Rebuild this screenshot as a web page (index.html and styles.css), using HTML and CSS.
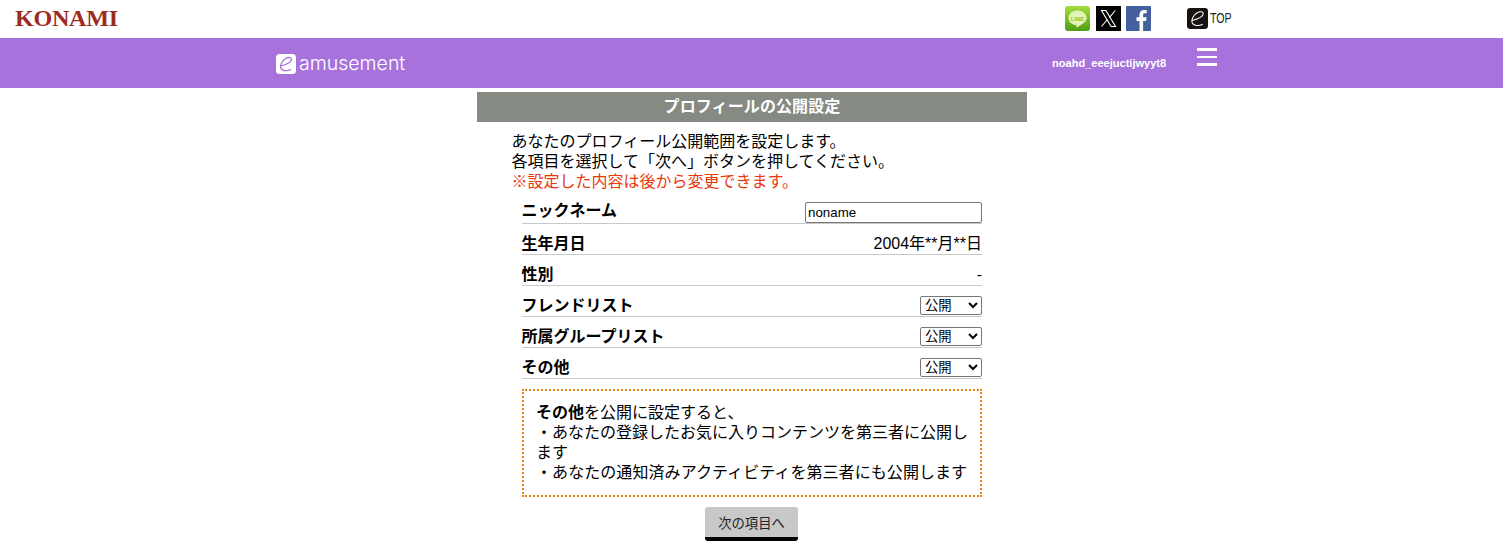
FILE: index.html
```html
<!DOCTYPE html>
<html lang="ja">
<head>
<meta charset="utf-8">
<title>プロフィールの公開設定</title>
<link rel="stylesheet" href="styles.css">
</head>
<body>
<header class="topbar">
  <div class="konami"><span class="konami-word">KONAMI</span></div>
  <div class="social">
    <svg class="sicon" viewBox="0 0 25 25"><defs><linearGradient id="lg" x1="0" y1="0" x2="0" y2="1"><stop offset="0" stop-color="#a6dc3c"/><stop offset="1" stop-color="#4f9e14"/></linearGradient></defs><rect width="25" height="25" rx="3" fill="url(#lg)"/><path d="M12.5 4.500C7.500 4.500 3.500 7.800 3.500 12c0 3.600 3.100 6.500 7.400 7.100.8.200.4 1.400.3 2-.1.500.3.600.8.300 2.400-1.400 7.500-4.500 8.700-6.300.7-1 1-2 1-3.100C21.500 7.800 17.500 4.500 12.500 4.500z" fill="#e3f4b8"/><text x="12.500" y="14.500" class="linetxt">LINE</text></svg>
    <svg class="sicon" viewBox="0 0 25 25"><rect width="25" height="25" fill="#000"/><path d="M5.500 4.500h4.400l9.600 16h-4.400z" fill="none" stroke="#fff" stroke-width="1.100"/><path d="M19.300 4.500l-6 7.100M11.500 13.500l-6 7" stroke="#fff" stroke-width="1.100" fill="none"/></svg>
    <svg class="sicon" viewBox="0 0 25 25"><rect width="25" height="25" rx="1" fill="#44609f"/><path d="M13.500 25V15h-3v-3.800h3V8.600c0-3.100 1.900-4.700 4.600-4.700 1.300 0 2.300.1 2.600.1v3.300h-1.900c-1.400 0-1.700.7-1.700 1.700v2.200h3.500l-.5 3.800h-3V25z" fill="#fff"/></svg>
  </div>
  <div class="toplink">
    <svg class="eicon" viewBox="0 0 20 20"><rect width="20" height="20" rx="3" fill="#17120f"/><path d="M4.800 12C9 10.800 15.500 8.200 15.500 5.200 15.500 3.200 12.300 3 9.700 4.500 6 6.800 3.800 11 4.800 14c1 3 6.200 3.500 10.200 1.500" fill="none" stroke="#fff" stroke-width="1"/></svg>
    <span class="toptext">TOP</span>
  </div>
</header>
<nav class="band">
  <div class="brand">
    <svg class="brandicon" viewBox="0 0 20 20"><rect width="20" height="20" rx="3.500" fill="#fff"/><path d="M4.800 12C9 10.800 15.500 8.200 15.500 5.200 15.500 3.200 12.300 3 9.700 4.500 6 6.800 3.800 11 4.800 14c1 3 6.200 3.500 10.200 1.500" fill="none" stroke="#a772dc" stroke-width="1.300"/></svg>
    <span class="brandtext">amusement</span>
  </div>
  <div class="user">noahd_eeejuctijwyyt8</div>
  <div class="burger"><span></span><span></span><span></span></div>
</nav>
<main class="page">
  <h1 class="title">プロフィールの公開設定</h1>
  <div class="intro">
    <p>あなたのプロフィール公開範囲を設定します。</p>
    <p>各項目を選択して「次へ」ボタンを押してください。</p>
    <p class="warn">※設定した内容は後から変更できます。</p>
  </div>
  <div class="rows">
    <div class="row first"><b class="label">ニックネーム</b><input class="nick" type="text" value="noname"></div>
    <div class="row"><b class="label">生年月日</b><span class="val">2004年**月**日</span></div>
    <div class="row"><b class="label">性別</b><span class="val">-</span></div>
    <div class="row"><b class="label">フレンドリスト</b><select class="sel"><option>公開</option></select></div>
    <div class="row"><b class="label">所属グループリスト</b><select class="sel"><option>公開</option></select></div>
    <div class="row"><b class="label">その他</b><select class="sel"><option>公開</option></select></div>
  </div>
  <div class="note">
    <p><b>その他</b>を公開に設定すると、</p>
    <p>・あなたの登録したお気に入りコンテンツを第三者に公開します</p>
    <p class="wide">・あなたの通知済みアクティビティを第三者にも公開します</p>
  </div>
  <div class="actions"><button class="next" type="button">次の項目へ</button></div>
</main>
</body>
</html>
```
FILE: styles.css
```css
* { box-sizing: border-box; }
html, body { margin: 0; padding: 0; background: #fff; }
body {
  font-family: "Liberation Sans", "Noto Sans CJK JP", sans-serif;
  font-size: 16px;
  color: #000;
  overflow: hidden;
}
p { margin: 0; }

.topbar {
  height: 38px;
  display: flex;
  align-items: flex-start;
  background: #fff;
}
.konami {
  margin: 5px 0 0 15px;
  width: 1050px;
  height: 27px;
}
.konami-word {
  display: inline-block;
  font-family: "Liberation Serif", serif;
  font-weight: 700;
  font-size: 23px;
  line-height: 27px;
  letter-spacing: -0.300px;
  color: #9e2a1e;
  transform: scaleX(1.05);
  transform-origin: left center;
}
.social { display: flex; margin-top: 6px; }
.sicon { width: 25px; height: 25px; display: block; margin-left: 5px; }
.sicon:first-child { margin-left: 0; }
.sicon:nth-child(2) { margin-left: 6px; }
.linetxt { font: 700 6px "Liberation Sans", sans-serif; fill: #86c52c; text-anchor: middle; }
.toplink { display: flex; align-items: center; margin: 8px 0 0 36px; }
.eicon { width: 21px; height: 21px; display: block; }
.toptext {
  margin-left: 2px;
  font-family: "Liberation Sans", sans-serif;
  font-size: 14px;
  line-height: 21px;
  width: 22px;
  display: inline-block;
  transform: scaleX(0.76);
  transform-origin: left center;
  color: #222;
}

.band {
  height: 50px;
  background: #a772dc;
  display: flex;
  align-items: flex-start;
  color: #fff;
}
.brand { display: flex; align-items: center; margin: 15px 0 0 276px; width: 776px; height: 21px; }
.brandicon { width: 20px; height: 20px; display: block; }
.brandtext {
  margin: 0 0 1px 3px;
  font-family: "Inter", sans-serif;
  font-weight: 300;
  font-size: 19.500px;
  line-height: 20px;
}
.user {
  margin-top: 17px;
  width: 145px;
  font-size: 11.050px;
  font-weight: 700;
  line-height: 16px;
  white-space: nowrap;
}
.burger { margin-top: 10px; width: 20px; display: flex; flex-direction: column; gap: 5px; }
.burger span { display: block; height: 2.500px; background: #fff; }

.page { width: 550px; margin: 4px 0 0 477px; }
.title {
  margin: 0;
  height: 30px;
  background: #858a83;
  color: #fff;
  font-size: 16px;
  font-weight: 700;
  line-height: 30px;
  text-align: center;
  letter-spacing: 0.100px;
}
.intro { padding: 10px 0 0 34.500px; line-height: 20px; font-size: 16px; }
.warn { color: #e8380d; }

.rows { margin: 0 45px; padding-top: 1px; }
.row {
  height: 31px;
  display: flex;
  justify-content: space-between;
  align-items: flex-end;
  border-bottom: 1px solid #c8c8c8;
}
.label { font-size: 16px; line-height: 20px; margin-left: -0.500px; }
.first .label { margin-bottom: 2px; }
.val { font-size: 16px; line-height: 21px; }
.nick {
  width: 177px;
  height: 21px;
  padding: 1px 2px;
  border: 1px solid #767676;
  border-radius: 2px;
  font: 13.333px/17px "Liberation Sans", sans-serif;
  color: #000;
  background: #fff;
}
.sel {
  width: 62px;
  height: 19px;
  margin-bottom: 1px;
  padding: 0;
  border: 1px solid #767676;
  border-radius: 2px;
  font: 13.333px "Liberation Sans", "Noto Sans CJK JP", sans-serif;
  color: #000;
  background: #fff;
}

.note {
  margin: 10px 45px 0;
  height: 108px;
  padding: 12px 12px 0;
  border: 2px dotted #e8861a;
  line-height: 20px;
  font-size: 16px;
}
.wide { letter-spacing: 0.070px; }
.actions { display: flex; justify-content: center; padding: 10px 1px 0 0; }
.next {
  width: 93px;
  height: 34px;
  padding: 0;
  border: 0;
  border-bottom: 4px solid #000;
  border-radius: 3px;
  background: #c8c8c8;
  color: #222;
  font: 13.333px "Liberation Sans", "Noto Sans CJK JP", sans-serif;
}
```
